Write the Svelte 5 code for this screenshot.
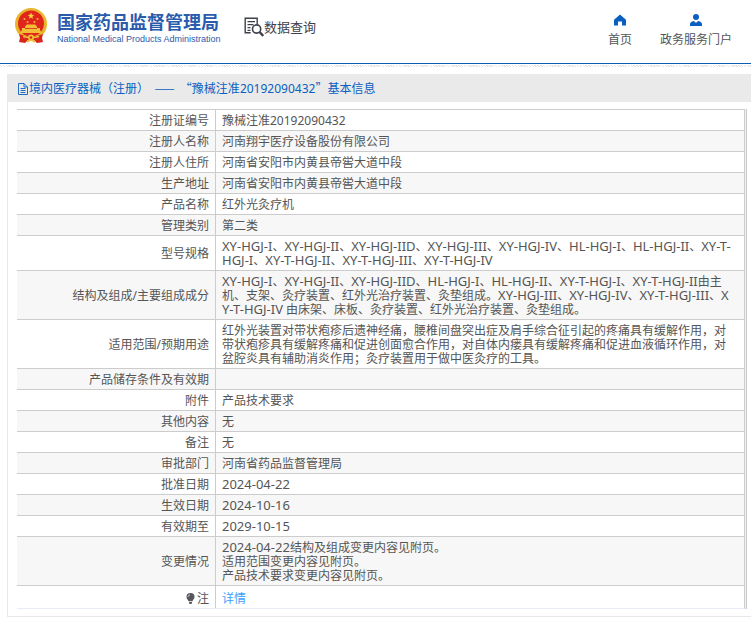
<script>
  const rows = [
    ['注册证编号', '豫械注准20192090432'],
    ['注册人名称', '河南翔宇医疗设备股份有限公司'],
    ['注册人住所', '河南省安阳市内黄县帝喾大道中段'],
    ['生产地址', '河南省安阳市内黄县帝喾大道中段'],
    ['产品名称', '红外光灸疗机'],
    ['管理类别', '第二类'],
    ['型号规格', 'XY-HGJ-I、XY-HGJ-II、XY-HGJ-IID、XY-HGJ-III、XY-HGJ-IV、HL-HGJ-I、HL-HGJ-II、XY-T-\nHGJ-I、XY-T-HGJ-II、XY-T-HGJ-III、XY-T-HGJ-IV'],
    ['结构及组成/主要组成成分', 'XY-HGJ-I、XY-HGJ-II、XY-HGJ-IID、HL-HGJ-I、HL-HGJ-II、XY-T-HGJ-I、XY-T-HGJ-II由主\n机、支架、灸疗装置、红外光治疗装置、灸垫组成。XY-HGJ-III、XY-HGJ-IV、XY-T-HGJ-III、X\nY-T-HGJ-IV 由床架、床板、灸疗装置、红外光治疗装置、灸垫组成。'],
    ['适用范围/预期用途', '红外光装置对带状疱疹后遗神经痛，腰椎间盘突出症及肩手综合征引起的疼痛具有缓解作用，对\n带状疱疹具有缓解疼痛和促进创面愈合作用，对自体内瘘具有缓解疼痛和促进血液循环作用，对\n盆腔炎具有辅助消炎作用；灸疗装置用于做中医灸疗的工具。'],
    ['产品储存条件及有效期', ''],
    ['附件', '产品技术要求'],
    ['其他内容', '无'],
    ['备注', '无'],
    ['审批部门', '河南省药品监督管理局'],
    ['批准日期', '2024-04-22'],
    ['生效日期', '2024-10-16'],
    ['有效期至', '2029-10-15'],
    ['变更情况', '2024-04-22结构及组成变更内容见附页。\n适用范围变更内容见附页。\n产品技术要求变更内容见附页。']
  ];

  // Model codes and dates are set slightly larger than the Chinese text;
  // odd entries of the result are the codes.
  const parts = (value) => (value.includes('-') ? value.split(/([A-Z0-9-]+)/) : [value]);
</script>

<header>
  <a class="brand" href="#home">
    <svg class="emblem" viewBox="0 0 34 36" aria-hidden="true">
      <path d="M7 26 L5 34 L11 35 L14 32 L20 32 L23 35 L29 34 L27 26Z" fill="#d9251c" />
      <circle cx="17" cy="16" r="16" fill="#e9b62b" />
      <circle cx="17" cy="15.5" r="13" fill="#e0261c" />
      <path d="M17 4.6l.9 2.2 2.3.1-1.8 1.5.6 2.3-2-1.3-2 1.3.6-2.3-1.8-1.5 2.3-.1z" fill="#f7d440" />
      <g fill="#f3bd35">
        <circle cx="10.5" cy="11" r="1" /><circle cx="13.5" cy="14" r="1" />
        <circle cx="20.5" cy="14" r="1" /><circle cx="23.5" cy="11" r="1" />
        <path d="M11 18.5l2-2h8l2 2v1.5h3v2l2 3H6l2-3v-2h3z" />
      </g>
      <path d="M11 20.5h12" stroke="#d9251c" stroke-width=".8" />
      <path d="M5 26q12 5 24 0l-1 4q-5 0-7 2h-8q-2-2-7-2z" fill="#d9251c" />
      <path d="M9 28.5q8 2 16 0M13 34q4-4 8 0" fill="none" stroke="#f0c238" stroke-width="1.8" />
      <circle cx="17" cy="29.5" r="3" fill="#f0c238" />
      <circle cx="17" cy="29.5" r="1.2" fill="#d9251c" />
    </svg>
    <span class="names">
      <strong>国家药品监督管理局</strong>
      <span class="english">National Medical Products Administration</span>
    </span>
  </a>
  <a class="query" href="#query">
    <svg width="20" height="20" viewBox="0 0 20 20" fill="none" stroke="#3f414a" aria-hidden="true">
      <path d="M13.2 7V1.2H1.2v14.6h5.5" stroke-width="1.4" />
      <path d="M3.5 4.6h7.5M3.5 7.6h6M3.5 10.6h3M3.5 13.4h3" stroke-width="1.2" />
      <circle cx="12.6" cy="12" r="4.1" stroke-width="1.6" />
      <path d="M15.6 15l3.6 4" stroke-width="2.4" />
    </svg>
    <span>数据查询</span>
  </a>
  <nav>
    <a href="#index">
      <svg width="12" height="12" viewBox="0 0 12 12" fill="#0a5fc0" aria-hidden="true">
        <path d="M6 .5L0 5.800V11.500H4V7.500H8V11.500H12V5.800Z" />
      </svg>
      首页
    </a>
    <a href="#portal">
      <svg width="12" height="12" viewBox="0 0 12 12" fill="#0a5fc0" aria-hidden="true">
        <circle cx="6" cy="3" r="3" />
        <path d="M0 12V10Q0 8 4 7L6 9L8 7Q12 8 12 10V12Z" />
      </svg>
      政务服务门户
    </a>
  </nav>
</header>
<div class="hatch"></div>

<main>
  <h1>
    <svg width="10" height="12" viewBox="0 0 10 12" fill="none" stroke="#0a5fc0" aria-hidden="true">
      <path d="M.5.5H6L9.5 4V11.5H.5ZM6 .5V4H9.5M2.5 5.5H7.5M2.5 7.5H7.5M2.5 9.5H7.5" stroke-width=".9" />
    </svg>
    <span>境内医疗器械（注册）&nbsp; ——&nbsp; “豫械注准<span class="number">20192090432</span>”基本信息</span>
  </h1>
  <div class="frame">
    <table>
      <tbody>
        {#each rows as [label, value]}
          <tr>
            <th scope="row">{label}</th>
            <td>{#each parts(value) as part, i}{#if i % 2}<span class="code">{part}</span>{:else}{part}{/if}{/each}</td>
          </tr>
        {/each}
        <tr class="note">
          <th scope="row">
            <svg width="9" height="11" viewBox="0 0 9 11" aria-hidden="true">
              <path d="M4.5 0a4 4 0 0 1 4 4c0 2-1.5 2.5-2 4.2h-4C2 6.5.5 6 .5 4a4 4 0 0 1 4-4z" fill="#55575c" />
              <path d="M3 9h3v1l-.7 1H3.7L3 10z" fill="#55575c" />
              <path d="M2 4Q2.2 2.2 4 1.7" fill="none" stroke="#fff" stroke-width=".7" />
            </svg>注
          </th>
          <td><a href="#detail">详情</a></td>
        </tr>
      </tbody>
    </table>
  </div>
</main>

<style>
  :global(body) {
    background: #fff;
    overflow-x: hidden;
    font-family: 'Noto Sans', 'Noto Sans CJK SC', sans-serif;
    font-size: 12px;
    line-height: 14px;
    color: #555;
  }
  a {
    color: inherit;
    text-decoration: none;
  }
  header {
    display: flex;
    align-items: flex-start;
    height: 63px;
    padding: 0 19px 0 14px;
    box-sizing: border-box;
  }
  .brand {
    display: flex;
    gap: 9px;
    padding-top: 8px;
    color: #2b5bab;
  }
  .emblem {
    width: 34px;
    height: 36px;
  }
  .names {
    display: flex;
    flex-direction: column;
    width: 162px;
    padding-top: 4px;
    white-space: nowrap;
  }
  strong {
    font-size: 18px;
    line-height: 20px;
  }
  .english {
    font: 9px/15px 'Liberation Sans', sans-serif;
  }
  .query {
    display: flex;
    align-items: center;
    margin-left: 25px;
    padding-top: 17px;
    font-size: 13px;
    line-height: 20px;
    color: #3f414a;
    white-space: nowrap;
  }
  nav {
    display: flex;
    gap: 28px;
    margin-left: auto;
    padding-top: 14px;
  }
  nav a {
    display: flex;
    flex-direction: column;
    align-items: center;
    gap: 7px;
    white-space: nowrap;
  }
  .hatch {
    height: 2px;
    border-top: 1px solid #0a5fb4;
    padding-top: 1px;
    background: repeating-linear-gradient(45deg, #fff 0 1px, #e2e2e2 1px 2px) content-box;
  }
  main {
    margin: 7px 0 0 7px;
    border: 1px solid #e8e8ec;
    border-width: 0 0 1px 1px;
    padding-bottom: 7px;
  }
  h1 {
    display: flex;
    align-items: center;
    gap: 1px;
    height: 28px;
    margin: 0 0 7px -1px;
    padding: 1px 0 0 11px;
    box-sizing: border-box;
    background: #eaeaea;
    color: #0a5fc0;
    font-family: 'Noto Sans CJK SC', sans-serif;
    font-size: 12px;
    font-weight: 400;
    white-space: nowrap;
  }
  .number {
    font-family: 'Noto Sans', sans-serif;
  }
  .frame {
    margin: 0 4px 0 9px;
    padding-right: 1px;
    border-right: 1px solid #ccc;
    background: #eef0f6;
  }
  table {
    width: 100%;
    border-collapse: separate;
    border-spacing: 0;
    border-right: 1px solid #ccc;
    border-bottom: 1px solid #e8ebf8;
    background: #fff;
  }
  tr:nth-child(even) {
    background: #f7f7f7;
  }
  th,
  td {
    height: 14px;
    padding: 4px 6px 2px;
    border-top: 1px solid #ccc;
    vertical-align: middle;
    font-weight: 400;
  }
  th {
    width: 186px;
    border-right: 1px solid #ccc;
    text-align: right;
    white-space: nowrap;
  }
  td {
    text-align: left;
    white-space: pre-line;
  }
  .code {
    font-size: 13px;
    line-height: 10px;
  }
  tr.note {
    background: #fff;
  }
  .note th,
  .note td {
    padding-top: 6px;
  }
  th svg {
    vertical-align: -1px;
    margin-right: 2px;
  }
  td a {
    color: #409eff;
  }
</style>
